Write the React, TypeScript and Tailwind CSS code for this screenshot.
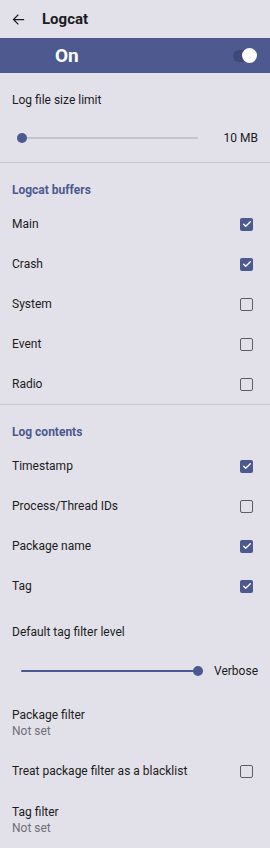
import React from 'react';

const Checkbox: React.FC<{ checked: boolean }> = ({ checked }) =>
  checked ? (
    <div className="w-[13px] h-[13px] rounded-[2px] bg-[#4c5890] flex items-center justify-center">
      <svg width="10" height="10" viewBox="0 0 24 24" fill="none" stroke="white" strokeWidth="3.2" strokeLinecap="round" strokeLinejoin="round">
        <path d="M4 12.5l5 5L20 6.5" />
      </svg>
    </div>
  ) : (
    <div className="w-[13px] h-[13px] rounded-[2px] border-[1.6px] border-[#5d5c64]" />
  );

const CheckRow: React.FC<{ label: string; checked: boolean }> = ({ label, checked }) => (
  <div className="h-[40px] flex items-center justify-between pl-[12px] pr-[17px]">
    <span className="text-[12px] leading-[16px] text-[#1c1b20]">{label}</span>
    <Checkbox checked={checked} />
  </div>
);

const Heading: React.FC<{ text: string }> = ({ text }) => (
  <div className="h-[41px] flex items-end pb-[6px] pl-[12px]">
    <span className="text-[12px] font-bold text-[#4c5890] leading-[16px]">{text}</span>
  </div>
);

const TwoLine: React.FC<{ title: string; sub: string; className?: string }> = ({ title, sub, className }) => (
  <div className={`pl-[12px] flex flex-col justify-center ${className ?? ''}`}>
    <span className="text-[12px] text-[#1c1b20] leading-[16px]">{title}</span>
    <span className="text-[12px] text-[#6f6e76] leading-[16px]">{sub}</span>
  </div>
);

export default function App() {
  return (
    <div className="w-[270px] h-[848px] overflow-hidden bg-[#e2e1e9] font-['Roboto',sans-serif]">
      {/* toolbar */}
      <div className="h-[38px] flex items-center">
        <svg className="ml-[11px]" width="15" height="15" viewBox="0 0 24 24" fill="none" stroke="#1c1b20" strokeWidth="2" strokeLinecap="square">
          <path d="M20 12H5M11 5l-7 7 7 7" />
        </svg>
        <span className="ml-[16px] text-[15px] font-bold text-[#1c1b20]">Logcat</span>
      </div>

      {/* master switch */}
      <div className="h-[35px] bg-[#4d598f] flex items-center justify-between pl-[55px] pr-[15px]">
        <span className="text-[19px] font-bold text-white leading-none">On</span>
        <div className="relative w-[22px] h-[14px]">
          <div className="absolute left-0 top-[1px] w-[20px] h-[12px] rounded-full bg-[#3e4878]" />
          <div className="absolute right-[-2px] top-[-1px] w-[15px] h-[15px] rounded-full bg-white" />
        </div>
      </div>

      {/* log size */}
      <div className="pt-[19px] pl-[12px] text-[12px] leading-[16px] text-[#1c1b20]">Log file size limit</div>
      <div className="mt-[10px] h-[40px] flex items-center pr-[12px]">
        <div className="relative ml-[17px] w-[181px] h-[10px] flex items-center">
          <div className="h-[2px] w-full bg-[#c4c3cb] rounded-full" />
          <div className="absolute left-0 top-0 w-[10px] h-[10px] rounded-full bg-[#4c5890]" />
        </div>
        <span className="ml-auto text-[12px] leading-[16px] text-[#1c1b20]">10 MB</span>
      </div>
      <div className="mt-[4px] h-px bg-[#c8c7cf]" />

      <Heading text="Logcat buffers" />
      <CheckRow label="Main" checked />
      <CheckRow label="Crash" checked />
      <CheckRow label="System" checked={false} />
      <CheckRow label="Event" checked={false} />
      <CheckRow label="Radio" checked={false} />
      <div className="h-px bg-[#c8c7cf]" />

      <Heading text="Log contents" />
      <CheckRow label="Timestamp" checked />
      <CheckRow label="Process/Thread IDs" checked={false} />
      <CheckRow label="Package name" checked />
      <CheckRow label="Tag" checked />

      {/* filter level */}
      <div className="pt-[18px] pl-[12px] text-[12px] leading-[16px] text-[#1c1b20]">Default tag filter level</div>
      <div className="mt-[11px] h-[40px] flex items-center pr-[12px]">
        <div className="relative ml-[21px] w-[182px] h-[10px] flex items-center">
          <div className="h-[2px] w-full bg-[#4c5890] rounded-full" />
          <div className="absolute right-0 top-0 w-[10px] h-[10px] rounded-full bg-[#4c5890]" />
        </div>
        <span className="ml-auto text-[12px] leading-[16px] text-[#1c1b20]">Verbose</span>
      </div>

      <TwoLine title="Package filter" sub="Not set" className="h-[60px] pt-[4px]" />
      <CheckRow label="Treat package filter as a blacklist" checked={false} />
      <TwoLine title="Tag filter" sub="Not set" className="h-[57px]" />
    </div>
  );
}
